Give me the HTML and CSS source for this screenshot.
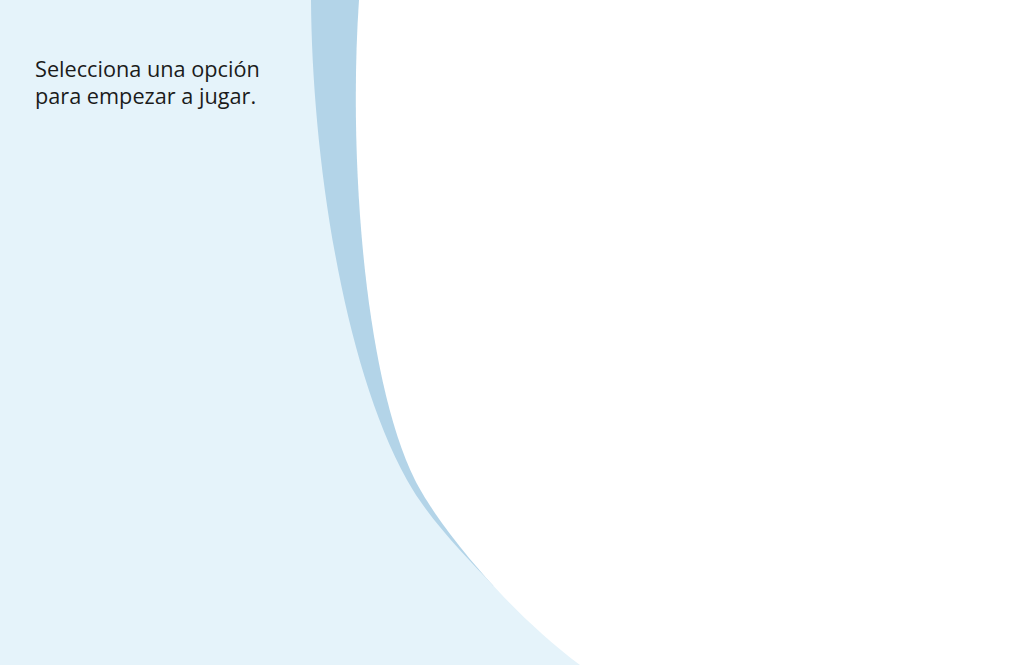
FILE: index.html
```html
<!DOCTYPE html>
<html>
	<head>
		<meta charset="UTF-8">
		<title>Selecciona una opción</title>
		<link rel="stylesheet" href="styles.css">
	</head>
	<body>
		<svg class="backdrop" viewBox="0 0 1024 665" preserveAspectRatio="none">
			<path class="band" d="M311,0 C312,150 341,360 407,480 C429,520 467.7,558 493,585.5 L1024,585.5 L1024,0 Z"/>
			<path class="sheet" d="M359,0 C348,160 365,380 415,480 C435,520 500,605 580,665 L1024,665 L1024,0 Z"/>
		</svg>
		<main class="intro">
			<p>Selecciona una opción<br>para empezar a jugar.</p>
		</main>
	</body>
</html>
```

FILE: styles.css
```css
html, body {
	height: 100%;
}
body {
	margin: 0;
	background: #e5f3fa;
	color: #1b1b1b;
	font-family: "Open Sans", "DejaVu Sans", sans-serif;
	overflow: hidden;
}
.backdrop {
	position: absolute;
	top: 0;
	left: 0;
	width: 100%;
	height: 100%;
}
.band {
	fill: #b3d4e8;
}
.sheet {
	fill: #fff;
}
.intro {
	position: relative;
	padding: 55px 0 0 35px;
}
.intro p {
	margin: 0;
	font-size: 21.7px;
	line-height: 27px;
}
```
